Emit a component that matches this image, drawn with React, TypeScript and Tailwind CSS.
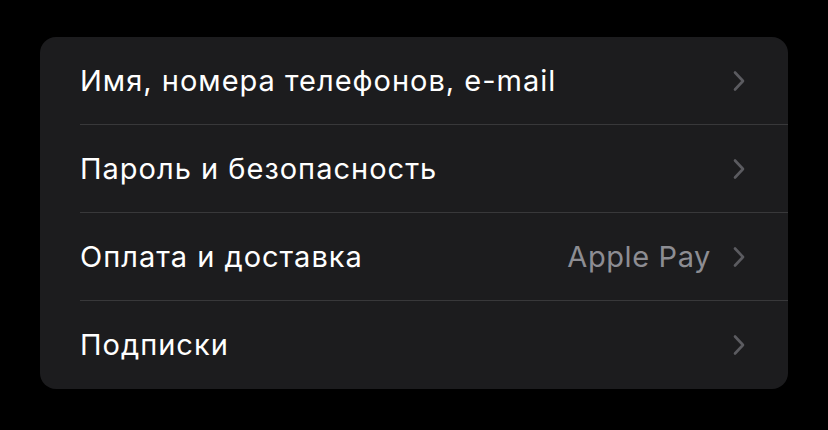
import React from 'react';

const rows: { label: string; detail?: string }[] = [
    { label: 'Имя, номера телефонов, e-mail' },
    { label: 'Пароль и безопасность' },
    { label: 'Оплата и доставка', detail: 'Apple Pay' },
    { label: 'Подписки' },
];

function Chevron() {
    return (
        <svg width="14" height="24" viewBox="0 0 14 24" fill="none" className="shrink-0">
            <path d="M3 3.5 L11 12 L3 20.5" stroke="#5b5b60" strokeWidth="2.6" strokeLinecap="round" strokeLinejoin="round" />
        </svg>
    );
}

export default function App() {
    return (
        <div className="min-h-[430px] w-[828px] bg-black pt-[37px] pl-[40px]" style={{ fontFamily: 'Inter, "Noto Sans", sans-serif' }}>
            <div className="w-[748px] overflow-hidden rounded-[16px] bg-[#1c1c1e]">
                {rows.map((row, index) => (
                    <div key={row.label} className="pl-[40px]">
                        <div
                            className={`flex h-[88px] items-center pr-[42px] ${index < rows.length - 1 ? 'border-b border-[#38383a]' : ''}`}
                        >
                            <span className="flex-1 text-[29px] tracking-[1px] text-white">{row.label}</span>
                            {row.detail && <span className="mr-[21px] text-[29px] tracking-[0.6px] text-[#8d8d93]">{row.detail}</span>}
                            <Chevron />
                        </div>
                    </div>
                ))}
            </div>
        </div>
    );
}
